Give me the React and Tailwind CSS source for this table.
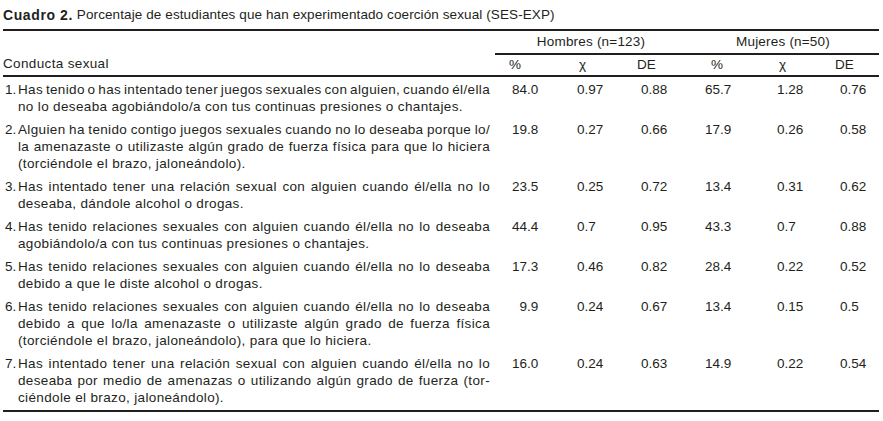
import React from "react";

const rows = [
  {
    n: "1.",
    lines: [
      "Has tenido o has intentado tener juegos sexuales con alguien, cuando él/ella",
      "no lo deseaba agobiándolo/a con tus continuas presiones o chantajes.",
    ],
    v: ["84.0", "0.97", "0.88", "65.7", "1.28", "0.76"],
  },
  {
    n: "2.",
    lines: [
      "Alguien ha tenido contigo juegos sexuales cuando no lo deseaba porque lo/",
      "la amenazaste o utilizaste algún grado de fuerza física para que lo hiciera",
      "(torciéndole el brazo, jaloneándolo).",
    ],
    v: ["19.8", "0.27", "0.66", "17.9", "0.26", "0.58"],
  },
  {
    n: "3.",
    lines: [
      "Has intentado tener una relación sexual con alguien cuando él/ella no lo",
      "deseaba, dándole alcohol o drogas.",
    ],
    v: ["23.5", "0.25", "0.72", "13.4", "0.31", "0.62"],
  },
  {
    n: "4.",
    lines: [
      "Has tenido relaciones sexuales con alguien cuando él/ella no lo deseaba",
      "agobiándolo/a con tus continuas presiones o chantajes.",
    ],
    v: ["44.4", "0.7", "0.95", "43.3", "0.7", "0.88"],
  },
  {
    n: "5.",
    lines: [
      "Has tenido relaciones sexuales con alguien cuando él/ella no lo deseaba",
      "debido a que le diste alcohol o drogas.",
    ],
    v: ["17.3", "0.46", "0.82", "28.4", "0.22", "0.52"],
  },
  {
    n: "6.",
    lines: [
      "Has tenido relaciones sexuales con alguien cuando él/ella no lo deseaba",
      "debido a que lo/la amenazaste o utilizaste algún grado de fuerza física",
      "(torciéndole el brazo, jaloneándolo), para que lo hiciera.",
    ],
    v: ["\u20079.9", "0.24", "0.67", "13.4", "0.15", "0.5"],
  },
  {
    n: "7.",
    lines: [
      "Has intentado tener una relación sexual con alguien cuando él/ella no lo",
      "deseaba por medio de amenazas o utilizando algún grado de fuerza (tor-",
      "ciéndole el brazo, jaloneándolo).",
    ],
    v: ["16.0", "0.24", "0.63", "14.9", "0.22", "0.54"],
  },
];

const dataPad = [
  "pl-[17px]",
  "pl-[18px]",
  "pl-[18px]",
  "pl-[18px]",
  "pl-[26px]",
  "pl-[25px]",
];

export default function App() {
  return (
    <div className="w-[883px] h-[421px] bg-white text-[#231f20] font-['Liberation_Sans',Arial,sans-serif] text-[13.5px] overflow-hidden">
      <div className="pl-[3px] pr-[4px]">
        <div className="h-[29px] flex items-center pt-[1px] whitespace-nowrap">
          <span className="font-bold text-[14px] tracking-[0.6px]">Cuadro 2.</span>
          <span className="tracking-[0.1px]">&nbsp;Porcentaje de estudiantes que han experimentado coerción sexual (SES-EXP)</span>
        </div>
        <div className="h-[2px] bg-[#231f20]" />
        <div className="grid grid-cols-[492px_repeat(6,64px)] leading-[18px]">
          <div className="row-span-2 flex items-end pb-[2px] tracking-[0.35px]">Conducta sexual</div>
          <div className="col-span-3 border-b-2 border-[#231f20] text-center pt-[2px] pb-[2px] tracking-[0.2px]">
            Hombres (n=123)
          </div>
          <div className="col-span-3 border-b-2 border-[#231f20] text-center pt-[2px] pb-[2px] tracking-[0.2px]">
            Mujeres (n=50)
          </div>
          <div className="pl-[14px] pt-[1px] pb-[1px]">%</div>
          <div className="pl-[20px] pt-[1px] pb-[1px]">χ</div>
          <div className="pl-[14px] pt-[1px] pb-[1px]">DE</div>
          <div className="pl-[24px] pt-[1px] pb-[1px]">%</div>
          <div className="pl-[28px] pt-[1px] pb-[1px]">χ</div>
          <div className="pl-[20px] pt-[1px] pb-[1px]">DE</div>
        </div>
        <div className="h-[2px] bg-[#231f20]" />
        <div className="flex flex-col pt-[1px] pb-[1px]">
          {rows.map((r) => (
            <div
              key={r.n}
              className="grid grid-cols-[492px_repeat(6,64px)] leading-[17px] py-[3px]"
            >
              <div className="flex tracking-[0.35px]">
                <div className="w-[15px] pl-[2px] shrink-0 tracking-normal">{r.n}</div>
                <div className="w-[472px]">
                  {r.lines.map((l, i) => (
                    <div
                      key={i}
                      className={
                        i < r.lines.length - 1
                          ? "text-justify [text-align-last:justify] whitespace-nowrap [word-spacing:-3px]"
                          : "whitespace-nowrap"
                      }
                    >
                      {l}
                    </div>
                  ))}
                </div>
              </div>
              {r.v.map((x, i) => (
                <div key={i} className={dataPad[i] + " whitespace-pre"}>
                  {x}
                </div>
              ))}
            </div>
          ))}
        </div>
        <div className="h-[2px] bg-[#231f20]" />
      </div>
    </div>
  );
}
